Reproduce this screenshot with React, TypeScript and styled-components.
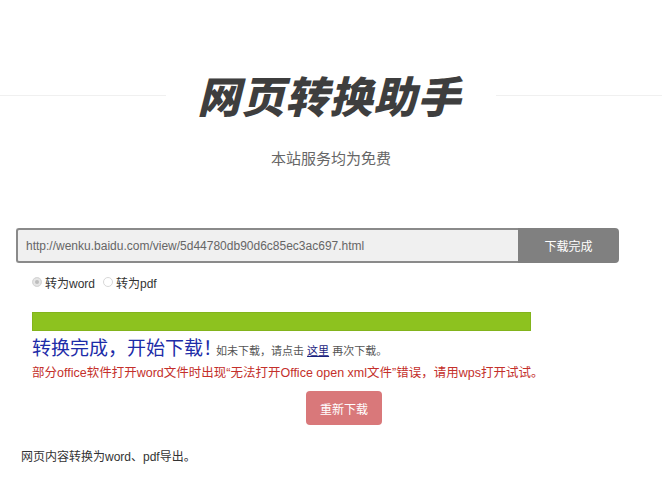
import styled, { createGlobalStyle } from "styled-components";

const GlobalStyle = createGlobalStyle`
  body {
    margin: 0;
    background: #fff;
    font-family: "Liberation Sans", "Noto Sans CJK SC", sans-serif;
    color: #333;
  }
`;

export default function App() {
  return (
    <Page>
      <GlobalStyle />
      <TitleRow>
        <Rule />
        <Title>网页转换助手</Title>
        <Rule />
      </TitleRow>
      <Subtitle>本站服务均为免费</Subtitle>

      <UrlForm>
        <UrlField>http://wenku.baidu.com/view/5d44780db90d6c85ec3ac697.html</UrlField>
        <DoneButton>下载完成</DoneButton>
      </UrlForm>

      <Options>
        <Option>
          <Radio checked />
          转为word
        </Option>
        <Option>
          <Radio />
          转为pdf
        </Option>
      </Options>

      <Result>
        <Progress />
        <Message>
          <Big>转换完成，开始下载！</Big>
          <Small>
            如未下载，请点击 <a href="#">这里</a> 再次下载。
          </Small>
        </Message>
        <Warning>
          部分office软件打开word文件时出现“无法打开Office open xml文件”错误，请用wps打开试试。
        </Warning>
      </Result>

      <RetryRow>
        <RetryButton>重新下载</RetryButton>
      </RetryRow>

      <Footer>网页内容转换为word、pdf导出。</Footer>
    </Page>
  );
}

const Page = styled.div`
  padding-top: 69px;
`;

const TitleRow = styled.div`
  display: flex;
  align-items: center;
`;

const Rule = styled.div`
  flex: 1;
  height: 1px;
  background: #f0f0f0;
  margin-top: 3px;
`;

const Title = styled.h1`
  margin: 0;
  padding: 0 30px 0 36px;
  font-family: "Noto Sans CJK SC", sans-serif;
  font-size: 43px;
  font-weight: 900;
  line-height: 50px;
  letter-spacing: 1px;
  color: #3e3e3e;
  transform: skewX(-14deg);
`;

const Subtitle = styled.p`
  margin: 29px 0 0;
  text-align: center;
  font-family: "Noto Sans CJK SC", sans-serif;
  font-size: 15px;
  line-height: 20px;
  color: #666;
`;

const UrlForm = styled.div`
  display: flex;
  margin: 60px 0 0 16px;
  width: 603px;
  height: 35px;
`;

const UrlField = styled.div`
  flex: 1;
  display: flex;
  align-items: center;
  padding-left: 8px;
  background: #f0f0f0;
  border: 2px solid #8a8a8a;
  border-right: none;
  border-radius: 3px 0 0 3px;
  font-size: 12px;
  color: #666;
`;

const DoneButton = styled.div`
  width: 101px;
  display: flex;
  align-items: center;
  justify-content: center;
  background: #808080;
  border-radius: 0 4px 4px 0;
  color: #fff;
  font-size: 12px;
`;

const Options = styled.div`
  display: flex;
  gap: 8px;
  margin: 11px 0 0 32px;
  height: 16px;
`;

const Option = styled.label`
  display: flex;
  align-items: center;
  gap: 3px;
  font-size: 12px;
  color: #333;
`;

const Radio = styled.span<{ checked?: boolean }>`
  width: 8px;
  height: 8px;
  border-radius: 50%;
  border: 1px solid #d8d8d8;
  background: ${(p) => (p.checked ? "#bdbdbd" : "#fff")};
  box-shadow: ${(p) => (p.checked ? "inset 0 0 0 2px #e6e6e6" : "none")};
`;

const Result = styled.div`
  margin: 22px 0 0 32px;
`;

const Progress = styled.div`
  width: 499px;
  height: 19px;
  background: #8dc21f;
  border: 1px solid #83b41c;
  box-sizing: border-box;
`;

const Message = styled.div`
  display: flex;
  align-items: baseline;
  margin-top: 3px;
  height: 26px;
`;

const Big = styled.span`
  font-family: "Noto Sans CJK SC", sans-serif;
  font-size: 19px;
  line-height: 26px;
  color: #1d2ca8;
`;

const Small = styled.span`
  margin-left: -6px;
  font-size: 11px;
  color: #555;

  a {
    color: #1a237e;
    text-decoration: underline;
  }
`;

const Warning = styled.p`
  margin: 5px 0 0;
  font-size: 12.5px;
  line-height: 17px;
  color: #c4302b;
`;

const RetryRow = styled.div`
  display: flex;
  justify-content: center;
  padding-left: 26px;
  margin-top: 9px;
`;

const RetryButton = styled.div`
  width: 76px;
  height: 34px;
  display: flex;
  align-items: center;
  justify-content: center;
  background: #d9787a;
  border-radius: 4px;
  color: #fff;
  font-size: 12px;
`;

const Footer = styled.p`
  margin: 22px 0 0 21px;
  font-size: 12px;
  color: #333;
`;
